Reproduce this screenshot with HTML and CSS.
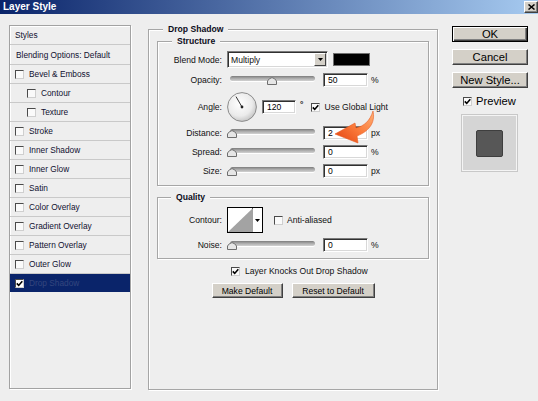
FILE: index.html
```html
<!DOCTYPE html>
<html>
<head>
<meta charset="utf-8">
<title>Layer Style</title>
<link rel="stylesheet" href="styles.css">
</head>
<body>
<div class="titlebar">
  <span class="title">Layer Style</span>
  <span class="close"><svg width="7" height="6" viewBox="0 0 7 6"><path d="M0.5 0.5 L6.5 5.5 M6.5 0.5 L0.5 5.5" stroke="#000" stroke-width="1.5"/></svg></span>
</div>
<div class="content">
  <div class="styles-list">
    <div class="row head">Styles</div>
    <div class="row blend">Blending Options: Default</div>
    <div class="row"><span class="cb"></span>Bevel &amp; Emboss</div>
    <div class="row sub"><span class="cb"></span>Contour</div>
    <div class="row sub"><span class="cb"></span>Texture</div>
    <div class="row"><span class="cb"></span>Stroke</div>
    <div class="row"><span class="cb"></span>Inner Shadow</div>
    <div class="row"><span class="cb"></span>Inner Glow</div>
    <div class="row"><span class="cb"></span>Satin</div>
    <div class="row"><span class="cb"></span>Color Overlay</div>
    <div class="row"><span class="cb"></span>Gradient Overlay</div>
    <div class="row"><span class="cb"></span>Pattern Overlay</div>
    <div class="row"><span class="cb"></span>Outer Glow</div>
    <div class="row sel"><span class="cb"><svg class="chk" width="7" height="7" viewBox="0 0 7 7"><path d="M0.8 3.4 L2.7 5.4 L6.3 1.2" fill="none" stroke="#000" stroke-width="1.6"/></svg></span>Drop Shadow</div>
  </div>

  <fieldset class="main">
    <legend>Drop Shadow</legend>
    <fieldset class="group structure">
      <legend>Structure</legend>
      <div class="frow r-blend">
        <span class="lbl">Blend Mode:</span>
        <span class="select"><span class="sel-text">Multiply</span><span class="dd"><svg width="5" height="3" viewBox="0 0 5 3"><path d="M0 0 H5 L2.5 3 Z" fill="#000"/></svg></span></span>
        <span class="swatch"></span>
      </div>
      <div class="frow r-gap4">
        <span class="lbl">Opacity:</span>
        <span class="slider"><span class="track"></span><span class="thumb" style="left:37px"><svg width="10" height="8" viewBox="0 0 10 8"><path d="M0.5 7.5 V4 Q2 1.2 5 0.6 Q8 1.2 9.5 4 V7.5 Z" fill="#e6e6e6" stroke="#6e6e6e"/></svg></span></span>
        <span class="inp">50</span><span class="unit">%</span>
      </div>
      <div class="frow r-angle">
        <span class="lbl">Angle:</span>
        <span class="dial"><svg width="30" height="30" viewBox="0 0 30 30"><defs><radialGradient id="dg" cx="0.42" cy="0.38" r="0.62"><stop offset="0" stop-color="#ffffff"/><stop offset="0.7" stop-color="#ebebeb"/><stop offset="1" stop-color="#c9c9c9"/></radialGradient></defs><circle cx="15" cy="15" r="14.4" fill="url(#dg)" stroke="#8c8c8c" stroke-width="1"/><line x1="15" y1="15" x2="9" y2="4.6" stroke="#333" stroke-width="1"/><circle cx="15" cy="15" r="1.4" fill="#222"/></svg></span>
        <span class="inp inp-angle">120</span><span class="deg">°</span>
        <span class="cb cb-gl"><svg class="chk" width="7" height="7" viewBox="0 0 7 7"><path d="M0.8 3.4 L2.7 5.4 L6.3 1.2" fill="none" stroke="#000" stroke-width="1.6"/></svg></span><span class="cb-lbl">Use Global Light</span>
      </div>
      <div class="frow r-gap3">
        <span class="lbl">Distance:</span>
        <span class="slider"><span class="track"></span><span class="thumb" style="left:-3px"><svg width="10" height="8" viewBox="0 0 10 8"><path d="M0.5 7.5 V4 Q2 1.2 5 0.6 Q8 1.2 9.5 4 V7.5 Z" fill="#e6e6e6" stroke="#6e6e6e"/></svg></span></span>
        <span class="inp">2</span><span class="unit">px</span>
      </div>
      <div class="frow r-gap3">
        <span class="lbl">Spread:</span>
        <span class="slider"><span class="track"></span><span class="thumb" style="left:-3px"><svg width="10" height="8" viewBox="0 0 10 8"><path d="M0.5 7.5 V4 Q2 1.2 5 0.6 Q8 1.2 9.5 4 V7.5 Z" fill="#e6e6e6" stroke="#6e6e6e"/></svg></span></span>
        <span class="inp">0</span><span class="unit">%</span>
      </div>
      <div class="frow r-gap3">
        <span class="lbl">Size:</span>
        <span class="slider"><span class="track"></span><span class="thumb" style="left:-3px"><svg width="10" height="8" viewBox="0 0 10 8"><path d="M0.5 7.5 V4 Q2 1.2 5 0.6 Q8 1.2 9.5 4 V7.5 Z" fill="#e6e6e6" stroke="#6e6e6e"/></svg></span></span>
        <span class="inp">0</span><span class="unit">px</span>
      </div>
    </fieldset>

    <fieldset class="group quality">
      <legend>Quality</legend>
      <div class="frow r-contour">
        <span class="lbl">Contour:</span>
        <span class="contour"><span class="contour-img"><svg width="25" height="24" viewBox="0 0 25 24"><path d="M0 24 L25 0 V24 Z" fill="#a3a3a3"/></svg></span><span class="contour-dd"><svg width="5" height="3" viewBox="0 0 5 3"><path d="M0 0 H5 L2.5 3 Z" fill="#000"/></svg></span></span>
        <span class="cb cb-aa"></span><span class="cb-lbl">Anti-aliased</span>
      </div>
      <div class="frow r-gap4">
        <span class="lbl">Noise:</span>
        <span class="slider"><span class="track"></span><span class="thumb" style="left:-3px"><svg width="10" height="8" viewBox="0 0 10 8"><path d="M0.5 7.5 V4 Q2 1.2 5 0.6 Q8 1.2 9.5 4 V7.5 Z" fill="#e6e6e6" stroke="#6e6e6e"/></svg></span></span>
        <span class="inp">0</span><span class="unit">%</span>
      </div>
    </fieldset>

    <div class="knock"><span class="cb"><svg class="chk" width="7" height="7" viewBox="0 0 7 7"><path d="M0.8 3.4 L2.7 5.4 L6.3 1.2" fill="none" stroke="#000" stroke-width="1.6"/></svg></span><span>Layer Knocks Out Drop Shadow</span></div>
    <div class="btn-row">
      <span class="btn sm w1">Make Default</span>
      <span class="btn sm w2">Reset to Default</span>
    </div>
  </fieldset>

  <div class="right">
    <div class="btn big default">OK</div>
    <div class="btn big">Cancel</div>
    <div class="btn big">New Style...</div>
    <div class="preview-row"><span class="cb"><svg class="chk" width="7" height="7" viewBox="0 0 7 7"><path d="M0.8 3.4 L2.7 5.4 L6.3 1.2" fill="none" stroke="#000" stroke-width="1.6"/></svg></span><span>Preview</span></div>
    <div class="preview-box"><div class="preview-sq"></div></div>
  </div>
</div>

<svg class="arrow" width="50" height="42" viewBox="0 0 50 42">
  <defs>
    <linearGradient id="ag" x1="1" y1="0" x2="0" y2="1">
      <stop offset="0" stop-color="#ffb278"/>
      <stop offset="0.5" stop-color="#fa7a3a"/>
      <stop offset="1" stop-color="#e2400f"/>
    </linearGradient>
  </defs>
  <path d="M43 6 C45 15, 42 25, 27 31 L28 38 L5 29 L25 18 L26 23 C34 21, 40 16, 43 6 Z" fill="url(#ag)" stroke="#e85a20" stroke-width="0.6" stroke-linejoin="round"/>
</svg>
</body>
</html>
```

FILE: styles.css
```css
* {
  box-sizing: border-box;
}

html, body {
  margin: 0;
  padding: 0;
}

body {
  width: 538px;
  height: 401px;
  overflow: hidden;
  position: relative;
  background: #eeeeee;
  font-family: "Liberation Sans", Arial, sans-serif;
  font-size: 8.6px;
  color: #111;
}

/* Title bar */
.titlebar {
  height: 14px;
  background: linear-gradient(to right, #0a246a, #a6caf0);
  display: flex;
  align-items: center;
  justify-content: space-between;
  padding-left: 3px;
}

.title {
  color: #fff;
  font-weight: bold;
  font-size: 10px;
  line-height: 14px;
}

.close {
  width: 14px;
  height: 12px;
  margin-right: 0;
  background: #d4d0c8;
  border: 1px solid;
  border-color: #fff #404040 #404040 #fff;
  box-shadow: inset -1px -1px 0 #808080;
  display: flex;
  align-items: center;
  justify-content: center;
}

/* Main content columns */
.content {
  display: flex;
  align-items: flex-start;
  padding: 10px 0 0 9px;
}

/* Styles list */
.styles-list {
  width: 122px;
  height: 364px;
  margin-top: 1px;
  border: 1px solid #a2a2a2;
  box-shadow: 1px 1px 0 #fff, inset 1px 1px 0 #fff;
  font-size: 8.3px;
  color: #101030;
}

.row {
  height: 19px;
  border-bottom: 1px solid #c9c9c9;
  display: flex;
  align-items: center;
  padding-left: 5px;
  gap: 5px;
  white-space: nowrap;
}

.row.head {
  padding-left: 5px;
}

.row.blend {
  height: 20px;
  padding-left: 6px;
}

.row.sub {
  padding-left: 17px;
}

.row.sel {
  background: #0a246a;
  color: #34467e;
  border-bottom: none;
  height: 18px;
  margin-top: 0;
}

/* Checkbox */
.cb {
  width: 9px;
  height: 9px;
  flex-shrink: 0;
  background: #fafafa;
  border: 1px solid;
  border-color: #4a4a4a #cfcfcf #cfcfcf #4a4a4a;
  display: flex;
  align-items: center;
  justify-content: center;
}

.row.sel .cb {
  background: #fff;
}

.chk {
  display: block;
}

/* Fieldsets */
fieldset {
  margin: 0;
  padding: 0;
  min-width: 0;
  border: 1px solid #a6a6a6;
  box-shadow: 1px 1px 0 #fff, inset 1px 1px 0 #fff;
}

legend {
  padding: 0 5px;
  line-height: 11px;
  height: 11px;
  font-weight: bold;
  background: #eeeeee;
  color: #0c0c20;
}

.main {
  width: 290px;
  height: 366px;
  margin-left: 17px;
  padding-top: 1px;
}

.main > legend {
  margin-left: 14px;
}

.group {
  margin: 0 8px;
}

.structure {
  padding: 4px 0 6px 0;
}

.structure > legend {
  margin-left: 14px;
}

.quality {
  margin-top: 6px;
  padding: 4px 0 5px 0;
}

.quality > legend {
  margin-left: 13px;
}

.frow {
  display: flex;
  align-items: center;
  height: 16px;
  white-space: nowrap;
}

.lbl {
  width: 64px;
  flex-shrink: 0;
  text-align: right;
  margin-right: 5px;
}

.r-blend {
  height: 17px;
}

.r-gap4 {
  margin-top: 4px;
}

.r-gap3 {
  margin-top: 3px;
}

.r-angle {
  height: 30px;
  margin-top: 4px;
}

/* Select */
.select {
  width: 101px;
  height: 17px;
  background: #fff;
  border: 1px solid;
  border-color: #7a7a7a #fff #fff #7a7a7a;
  box-shadow: inset 1px 1px 0 #303030, inset -1px -1px 0 #d8d8d8;
  display: flex;
  align-items: center;
  justify-content: space-between;
}

.sel-text {
  padding-left: 3px;
}

.dd {
  width: 12px;
  height: 13px;
  margin-right: 1px;
  background: #d4d0c8;
  border: 1px solid;
  border-color: #fff #404040 #404040 #fff;
  display: flex;
  align-items: center;
  justify-content: center;
}

.swatch {
  width: 37px;
  height: 13px;
  margin-left: 5px;
  background: #000;
  border: 1px solid #707070;
}

/* Slider */
.slider {
  position: relative;
  width: 85px;
  height: 16px;
  margin-left: 3px;
  flex-shrink: 0;
}

.track {
  display: block;
  margin-top: 4px;
  height: 5px;
  border-radius: 3px;
  background: linear-gradient(#7c7c7c, #a9a9a9 45%, #d2d2d2);
  box-shadow: 0 1px 0 #fff;
}

.thumb {
  position: absolute;
  top: 5px;
  width: 10px;
  height: 8px;
}

.thumb svg {
  display: block;
}

/* Inputs */
.inp {
  width: 45px;
  height: 14px;
  flex-shrink: 0;
  margin-left: 8px;
  padding-left: 4px;
  line-height: 12px;
  background: #fff;
  border: 1px solid;
  border-color: #7a7a7a #fff #fff #7a7a7a;
  box-shadow: inset 1px 1px 0 #303030, inset -1px -1px 0 #d8d8d8;
  color: #000;
}

.unit {
  margin-left: 3px;
}

.dial {
  width: 30px;
  height: 30px;
  flex-shrink: 0;
}

.dial svg {
  display: block;
}

.inp-angle {
  width: 34px;
  margin-left: 5px;
}

.deg {
  margin-left: 4px;
  align-self: flex-start;
  margin-top: 7px;
  font-weight: bold;
}

.cb-gl {
  margin-left: 8px;
}

.cb-lbl {
  margin-left: 4px;
}

/* Contour */
.r-contour {
  height: 26px;
}

.contour {
  display: flex;
  width: 36px;
  height: 26px;
  border: 1px solid #000;
  background: #fff;
  flex-shrink: 0;
}

.contour-img {
  width: 25px;
  height: 24px;
  border-right: 1px solid #000;
}

.contour-img svg {
  display: block;
}

.contour-dd {
  flex: 1;
  display: flex;
  align-items: center;
  justify-content: center;
}

.cb-aa {
  margin-left: 11px;
}

/* Bottom of main */
.knock {
  display: flex;
  align-items: center;
  gap: 5px;
  height: 12px;
  margin: 6px 0 0 82px;
  white-space: nowrap;
}

.btn-row {
  display: flex;
  justify-content: center;
  gap: 9px;
  margin-top: 6px;
}

.btn {
  background: #d4d0c8;
  border: 1px solid;
  border-color: #fff #404040 #404040 #fff;
  box-shadow: inset -1px -1px 0 #808080;
  display: flex;
  align-items: center;
  justify-content: center;
  color: #000;
  white-space: nowrap;
}

.btn.sm {
  height: 15px;
}

.w1 {
  width: 71px;
}

.w2 {
  width: 83px;
}

/* Right column */
.right {
  width: 76px;
  margin-left: 14px;
  margin-top: 2px;
  font-size: 11.2px;
}

.btn.big {
  width: 76px;
  height: 16px;
  margin-bottom: 7px;
}

.btn.default {
  border: 1px solid #000;
  box-shadow: inset 1px 1px 0 #fff, inset -1px -1px 0 #404040, inset -2px -2px 0 #808080;
}

.preview-row {
  display: flex;
  align-items: center;
  gap: 4px;
  height: 12px;
  padding-left: 11px;
  color: #000;
}

.preview-box {
  width: 55px;
  height: 56px;
  margin: 8px 0 0 10px;
  background: #d5d5d5;
  border: 1px solid #f4f4f4;
  box-shadow: 0 0 0 1px #c8c8c8;
  display: flex;
  align-items: center;
  justify-content: center;
}

.preview-sq {
  width: 27px;
  height: 27px;
  background: #575757;
  border: 1px solid #3e3e3e;
  border-radius: 2px;
}

/* Annotation arrow */
.arrow {
  position: absolute;
  left: 330px;
  top: 105px;
}
```
